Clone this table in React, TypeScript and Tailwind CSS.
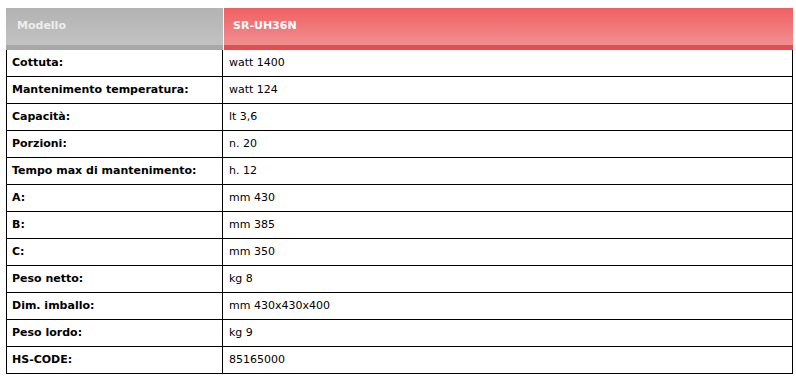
import React from 'react';

const rows: [string, string][] = [
  ['Cottuta:', 'watt 1400'],
  ['Mantenimento temperatura:', 'watt 124'],
  ['Capacità:', 'lt 3,6'],
  ['Porzioni:', 'n. 20'],
  ['Tempo max di mantenimento:', 'h. 12'],
  ['A:', 'mm 430'],
  ['B:', 'mm 385'],
  ['C:', 'mm 350'],
  ['Peso netto:', 'kg 8'],
  ['Dim. imballo:', 'mm 430x430x400'],
  ['Peso lordo:', 'kg 9'],
  ['HS-CODE:', '85165000'],
];

export default function App() {
  return (
    <div className="w-[796px] h-[381px] bg-white font-['DejaVu_Sans',Verdana,sans-serif] text-[11px] text-black">
      <div className="ml-[6px] pt-[8px] w-[787px]">
        {/* Header */}
        <div className="flex h-[42px]">
          <div className="w-[217px] flex items-center pl-[11px] font-bold text-[#eeeeee] bg-gradient-to-b from-[#b3b3b3] to-[#c2c2c2] border-b-[5px] border-[#a8a8a8]">
            Modello
          </div>
          <div className="w-px bg-white" />
          <div className="flex-1 flex items-center pl-[9px] font-bold text-white bg-gradient-to-b from-[#ef5f61] to-[#f08e90] border-b-[5px] border-[#e14e50]">
            SR-UH36N
          </div>
        </div>

        {/* Rows */}
        <div className="border-l border-r border-black">
          {rows.map(([label, value]) => (
            <div key={label} className="flex h-[27px] border-b border-black">
              <div className="w-[216px] flex items-center pl-[5px] font-bold border-r border-black">
                {label}
              </div>
              <div className="flex-1 flex items-center pl-[6px]">{value}</div>
            </div>
          ))}
        </div>
      </div>
    </div>
  );
}
